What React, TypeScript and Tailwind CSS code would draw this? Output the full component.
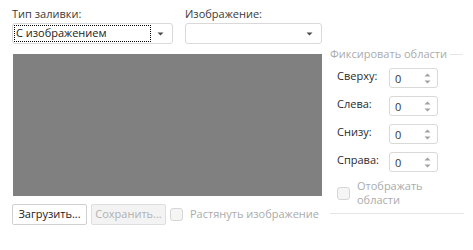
import React from "react";

const FONT = { fontFamily: '"Open Sans", "Noto Sans", sans-serif' };

function DownTri({ color = "#4a4a4a" }: { color?: string }) {
  return (
    <svg width="7" height="4" viewBox="0 0 7 4">
      <path d="M0.5 0.5 L6.5 0.5 L3.5 3.5 Z" fill={color} />
    </svg>
  );
}

function Spinner() {
  return (
    <div className="flex h-[20px] w-[49px] items-center rounded-[3px] border border-[#d9d9d9] bg-white pl-[5px]">
      <span className="flex-1 text-[11px] leading-none text-[#333]">0</span>
      <div className="flex w-[16px] flex-col items-center gap-[3px] pr-[3px]">
        <svg width="7" height="4" viewBox="0 0 7 4">
          <path d="M0.5 3.5 L6.5 3.5 L3.5 0.5 Z" fill="#a0a0a0" />
        </svg>
        <svg width="7" height="4" viewBox="0 0 7 4">
          <path d="M0.5 0.5 L6.5 0.5 L3.5 3.5 Z" fill="#a0a0a0" />
        </svg>
      </div>
    </div>
  );
}

function Row({ label }: { label: string }) {
  return (
    <div className="flex h-[20px] items-center pl-[7px]">
      <span className="w-[52px] -translate-y-[2px] whitespace-nowrap text-[11px] text-[#2b2b2b]">{label}</span>
      <Spinner />
    </div>
  );
}

export default function App() {
  return (
    <div className="flex h-[250px] w-[473px] bg-white pl-[12px] pt-[6px]" style={FONT}>
      <div className="flex w-[310px] flex-col">
        <div className="flex gap-[12px]">
          <div className="flex w-[161px] flex-col">
            <div className="h-[17px] whitespace-nowrap text-[11px] leading-[15px] text-[#3a3a3a]">Тип заливки:</div>
            <div className="flex h-[21px] items-center rounded-[3px] border border-[#d9d9d9] bg-white p-[1px] pr-[8px]">
              <div className="flex h-full flex-1 items-center whitespace-nowrap border border-dotted border-black pl-[1px] text-[11px] text-[#222]">
                С изображением
              </div>
              <div className="ml-[6px] flex items-center">
                <DownTri />
              </div>
            </div>
          </div>
          <div className="flex w-[137px] flex-col">
            <div className="h-[17px] whitespace-nowrap text-[11px] leading-[15px] text-[#3a3a3a]">Изображение:</div>
            <div className="flex h-[21px] items-center justify-end rounded-[3px] border border-[#d9d9d9] bg-white pr-[8px]">
              <DownTri />
            </div>
          </div>
        </div>
        <div className="ml-px mt-[10px] h-[142px] w-[309px] bg-[#808080]" />
        <div className="mt-[8px] flex h-[21px] items-center">
          <button className="flex h-[21px] w-[75px] items-center justify-center whitespace-nowrap rounded-[2px] border border-[#d0d0d0] bg-white text-[11px] text-[#222]">
            Загрузить...
          </button>
          <button className="ml-[4px] flex h-[21px] w-[75px] items-center justify-center whitespace-nowrap rounded-[2px] border border-[#dedede] bg-[#f3f3f3] text-[11px] text-[#b0b0b0]">
            Сохранить...
          </button>
          <div className="ml-[4px] h-[13px] w-[13px] shrink-0 rounded-[3px] border border-[#d6d6d6] bg-[#f5f5f5]" />
          <span className="ml-[7px] whitespace-nowrap text-[11px] text-[#ababab]">Растянуть изображение</span>
        </div>
      </div>
      <div className="ml-[8px] mt-[41px] flex w-[134px] flex-col">
        <div className="flex h-[14px] items-center">
          <span className="whitespace-nowrap text-[11px] text-[#ababab]">Фиксировать области</span>
          <div className="ml-[3px] mr-px h-px flex-1 bg-[#e6e6e6]" />
        </div>
        <div className="mt-[7px] flex flex-col gap-[8px]">
          <Row label="Сверху:" />
          <Row label="Слева:" />
          <Row label="Снизу:" />
          <Row label="Справа:" />
        </div>
        <div className="mt-[7px] flex items-center pl-[7px]">
          <div className="h-[13px] w-[13px] shrink-0 rounded-[3px] border border-[#d6d6d6] bg-[#f5f5f5]" />
          <div className="ml-[7px] flex flex-col text-[11px] leading-[14px] text-[#ababab]">
            <span>Отображать</span>
            <span>области</span>
          </div>
        </div>
        <div className="mt-[6px] h-px bg-[#e6e6e6]" />
      </div>
    </div>
  );
}
